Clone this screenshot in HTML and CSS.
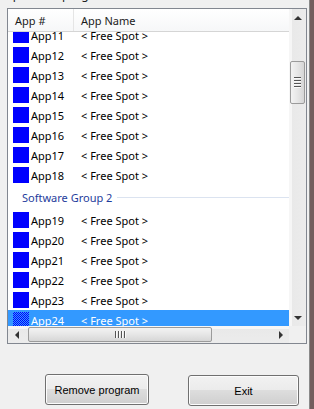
FILE: index.html
```html
<!DOCTYPE html>
<html>
<head>
<meta charset="utf-8">
<link rel="stylesheet" href="styles.css">
</head>
<body>
<div class="window">
  <div class="main">
    <div class="legend"><span class="legend-text">Uploaded programs</span></div>
    <div class="list">
      <div class="view">
        <div class="header">
          <div class="hcol hcol1">App #</div>
          <div class="hcol hcol2">App Name</div>
        </div>
        <div class="rows">
          <div class="rows-inner">
            <div class="row"><span class="sq"></span><span class="name">App11</span><span class="spot">&lt; Free Spot &gt;</span></div>
            <div class="row"><span class="sq"></span><span class="name">App12</span><span class="spot">&lt; Free Spot &gt;</span></div>
            <div class="row"><span class="sq"></span><span class="name">App13</span><span class="spot">&lt; Free Spot &gt;</span></div>
            <div class="row"><span class="sq"></span><span class="name">App14</span><span class="spot">&lt; Free Spot &gt;</span></div>
            <div class="row"><span class="sq"></span><span class="name">App15</span><span class="spot">&lt; Free Spot &gt;</span></div>
            <div class="row"><span class="sq"></span><span class="name">App16</span><span class="spot">&lt; Free Spot &gt;</span></div>
            <div class="row"><span class="sq"></span><span class="name">App17</span><span class="spot">&lt; Free Spot &gt;</span></div>
            <div class="row"><span class="sq"></span><span class="name">App18</span><span class="spot">&lt; Free Spot &gt;</span></div>
            <div class="group"><span class="group-title">Software Group 2</span><span class="group-line"></span></div>
            <div class="row"><span class="sq"></span><span class="name">App19</span><span class="spot">&lt; Free Spot &gt;</span></div>
            <div class="row"><span class="sq"></span><span class="name">App20</span><span class="spot">&lt; Free Spot &gt;</span></div>
            <div class="row"><span class="sq"></span><span class="name">App21</span><span class="spot">&lt; Free Spot &gt;</span></div>
            <div class="row"><span class="sq"></span><span class="name">App22</span><span class="spot">&lt; Free Spot &gt;</span></div>
            <div class="row"><span class="sq"></span><span class="name">App23</span><span class="spot">&lt; Free Spot &gt;</span></div>
            <div class="row selected"><span class="sq"></span><span class="name">App24</span><span class="spot">&lt; Free Spot &gt;</span></div>
          </div>
        </div>
      </div>
      <div class="vscroll">
        <div class="sbtn"><span class="arrow-up"></span></div>
        <div class="vtrack"><div class="vthumb"><span class="grip-h"></span><span class="grip-h"></span><span class="grip-h"></span><span class="grip-h"></span></div></div>
        <div class="sbtn"><span class="arrow-down"></span></div>
      </div>
      <div class="hscroll">
        <div class="sbtn"><span class="arrow-left"></span></div>
        <div class="htrack"><div class="hthumb"><span class="grip-v"></span><span class="grip-v"></span><span class="grip-v"></span><span class="grip-v"></span></div></div>
        <div class="sbtn"><span class="arrow-right"></span></div>
      </div>
      <div class="corner"></div>
    </div>
    <div class="buttons">
      <button class="btn btn-remove">Remove program</button>
      <button class="btn btn-exit">Exit</button>
    </div>
  </div>
  <div class="edge"></div>
</div>
</body>
</html>
```
FILE: styles.css
```css
html, body {
  margin: 0;
  padding: 0;
  background: #f0f0f0;
}
body {
  font-family: "Noto Sans", "Open Sans", sans-serif;
  font-size: 11px;
  color: #000;
}
.window {
  display: flex;
  width: 314px;
  height: 409px;
  overflow: hidden;
}
.main {
  width: 309px;
  display: flex;
  flex-direction: column;
}
.edge {
  width: 5px;
  box-sizing: border-box;
  border-left: 1px solid #8a8a8a;
  background: #735d5d;
}
.legend {
  height: 8px;
  overflow: hidden;
  padding-left: 4px;
}
.legend-text {
  display: block;
  margin-top: -12px;
  line-height: 14px;
  font-size: 12px;
  color: #222;
}
.list {
  margin-left: 7px;
  width: 300px;
  height: 336px;
  box-sizing: border-box;
  border: 1px solid #828790;
  background: #fff;
  display: grid;
  grid-template-columns: 1fr 17px;
  grid-template-rows: 1fr 17px;
}
.view {
  display: flex;
  flex-direction: column;
  overflow: hidden;
}
.header {
  height: 23px;
  box-sizing: border-box;
  border-bottom: 1px solid #d5d5d5;
  background: linear-gradient(#ffffff, #f6f7f8);
  display: flex;
  flex-shrink: 0;
}
.hcol {
  display: flex;
  align-items: center;
  padding-left: 7px;
  color: #4c607a;
  color: #1a1a1a;
  box-sizing: border-box;
}
.hcol1 {
  width: 66px;
  border-right: 1px solid #e5e5e5;
}
.hcol2 {
  flex: 1;
}
.rows {
  flex: 1;
  overflow: hidden;
}
.rows-inner {
  margin-top: -7px;
}
.row {
  height: 20px;
  display: flex;
  align-items: center;
  padding-left: 5px;
}
.sq {
  width: 16px;
  height: 16px;
  background: #0000ff;
  flex-shrink: 0;
}
.name {
  width: 50px;
  margin-left: 2px;
}
.spot {
  white-space: nowrap;
}
.selected {
  background: #3399ff;
  color: #fff;
}
.selected .sq {
  background-color: #3399ff;
  background-image: conic-gradient(#0000ff 25%, #3399ff 25% 50%, #0000ff 50% 75%, #3399ff 75%);
  background-size: 2px 2px;
}
.group {
  height: 25px;
  display: flex;
  align-items: center;
  padding-left: 14px;
}
.group-title {
  color: #1e3c9c;
  white-space: nowrap;
}
.group-line {
  flex: 1;
  height: 1px;
  margin-left: 5px;
  background: #dbe3f0;
}
.vscroll {
  display: flex;
  flex-direction: column;
  background: linear-gradient(to right, #f6f6f6 0, #f6f6f6 3px, #e9e9e9 3px, #ececec);
}
.sbtn {
  width: 17px;
  height: 17px;
  display: flex;
  align-items: center;
  justify-content: center;
  flex-shrink: 0;
}
.vtrack {
  flex: 1;
  padding-top: 35px;
}
.vthumb {
  width: 15px;
  height: 43px;
  margin-left: 1px;
  box-sizing: border-box;
  border: 1px solid #9b9b9b;
  border-radius: 2px;
  background: linear-gradient(to right, #f3f3f3, #e6e6e6 50%, #d6d6d6);
  display: flex;
  flex-direction: column;
  align-items: center;
  justify-content: center;
  gap: 1px;
}
.grip-h {
  width: 7px;
  height: 1px;
  background: #555;
  border-bottom: 1px solid #fafafa;
}
.arrow-up {
  width: 0;
  height: 0;
  border-left: 4px solid transparent;
  border-right: 4px solid transparent;
  border-bottom: 4px solid #333;
}
.arrow-down {
  width: 0;
  height: 0;
  border-left: 4px solid transparent;
  border-right: 4px solid transparent;
  border-top: 4px solid #333;
}
.arrow-left {
  width: 0;
  height: 0;
  border-top: 4px solid transparent;
  border-bottom: 4px solid transparent;
  border-right: 4px solid #333;
}
.arrow-right {
  width: 0;
  height: 0;
  border-top: 4px solid transparent;
  border-bottom: 4px solid transparent;
  border-left: 4px solid #333;
}
.hscroll {
  display: flex;
  background: linear-gradient(#f6f6f6 0, #f6f6f6 3px, #e9e9e9 3px, #ececec);
}
.htrack {
  flex: 1;
  padding-left: 3px;
  display: flex;
  align-items: center;
}
.hthumb {
  width: 184px;
  height: 15px;
  box-sizing: border-box;
  border: 1px solid #9b9b9b;
  border-radius: 2px;
  background: linear-gradient(#f3f3f3, #e6e6e6 50%, #d6d6d6);
  display: flex;
  align-items: center;
  justify-content: center;
  gap: 1px;
}
.grip-v {
  width: 1px;
  height: 7px;
  background: #555;
  border-right: 1px solid #fafafa;
}
.corner {
  background: #f0f0f0;
}
.buttons {
  display: flex;
  align-items: flex-start;
  margin-top: 30px;
}
.btn {
  font-family: "Liberation Sans", Arial, sans-serif;
  font-size: 11px;
  color: #000;
  height: 31px;
  box-sizing: border-box;
  border: 1px solid #707070;
  border-radius: 3px;
  box-shadow: inset 0 0 0 1px #fcfcfc;
  background: linear-gradient(#f2f2f2 0, #ebebeb 50%, #dddddd 50%, #cfcfcf 100%);
  padding: 0;
}
.btn-remove {
  margin-left: 45px;
  width: 104px;
}
.btn-exit {
  margin-left: 39px;
  margin-top: 1px;
  width: 111px;
}
```
